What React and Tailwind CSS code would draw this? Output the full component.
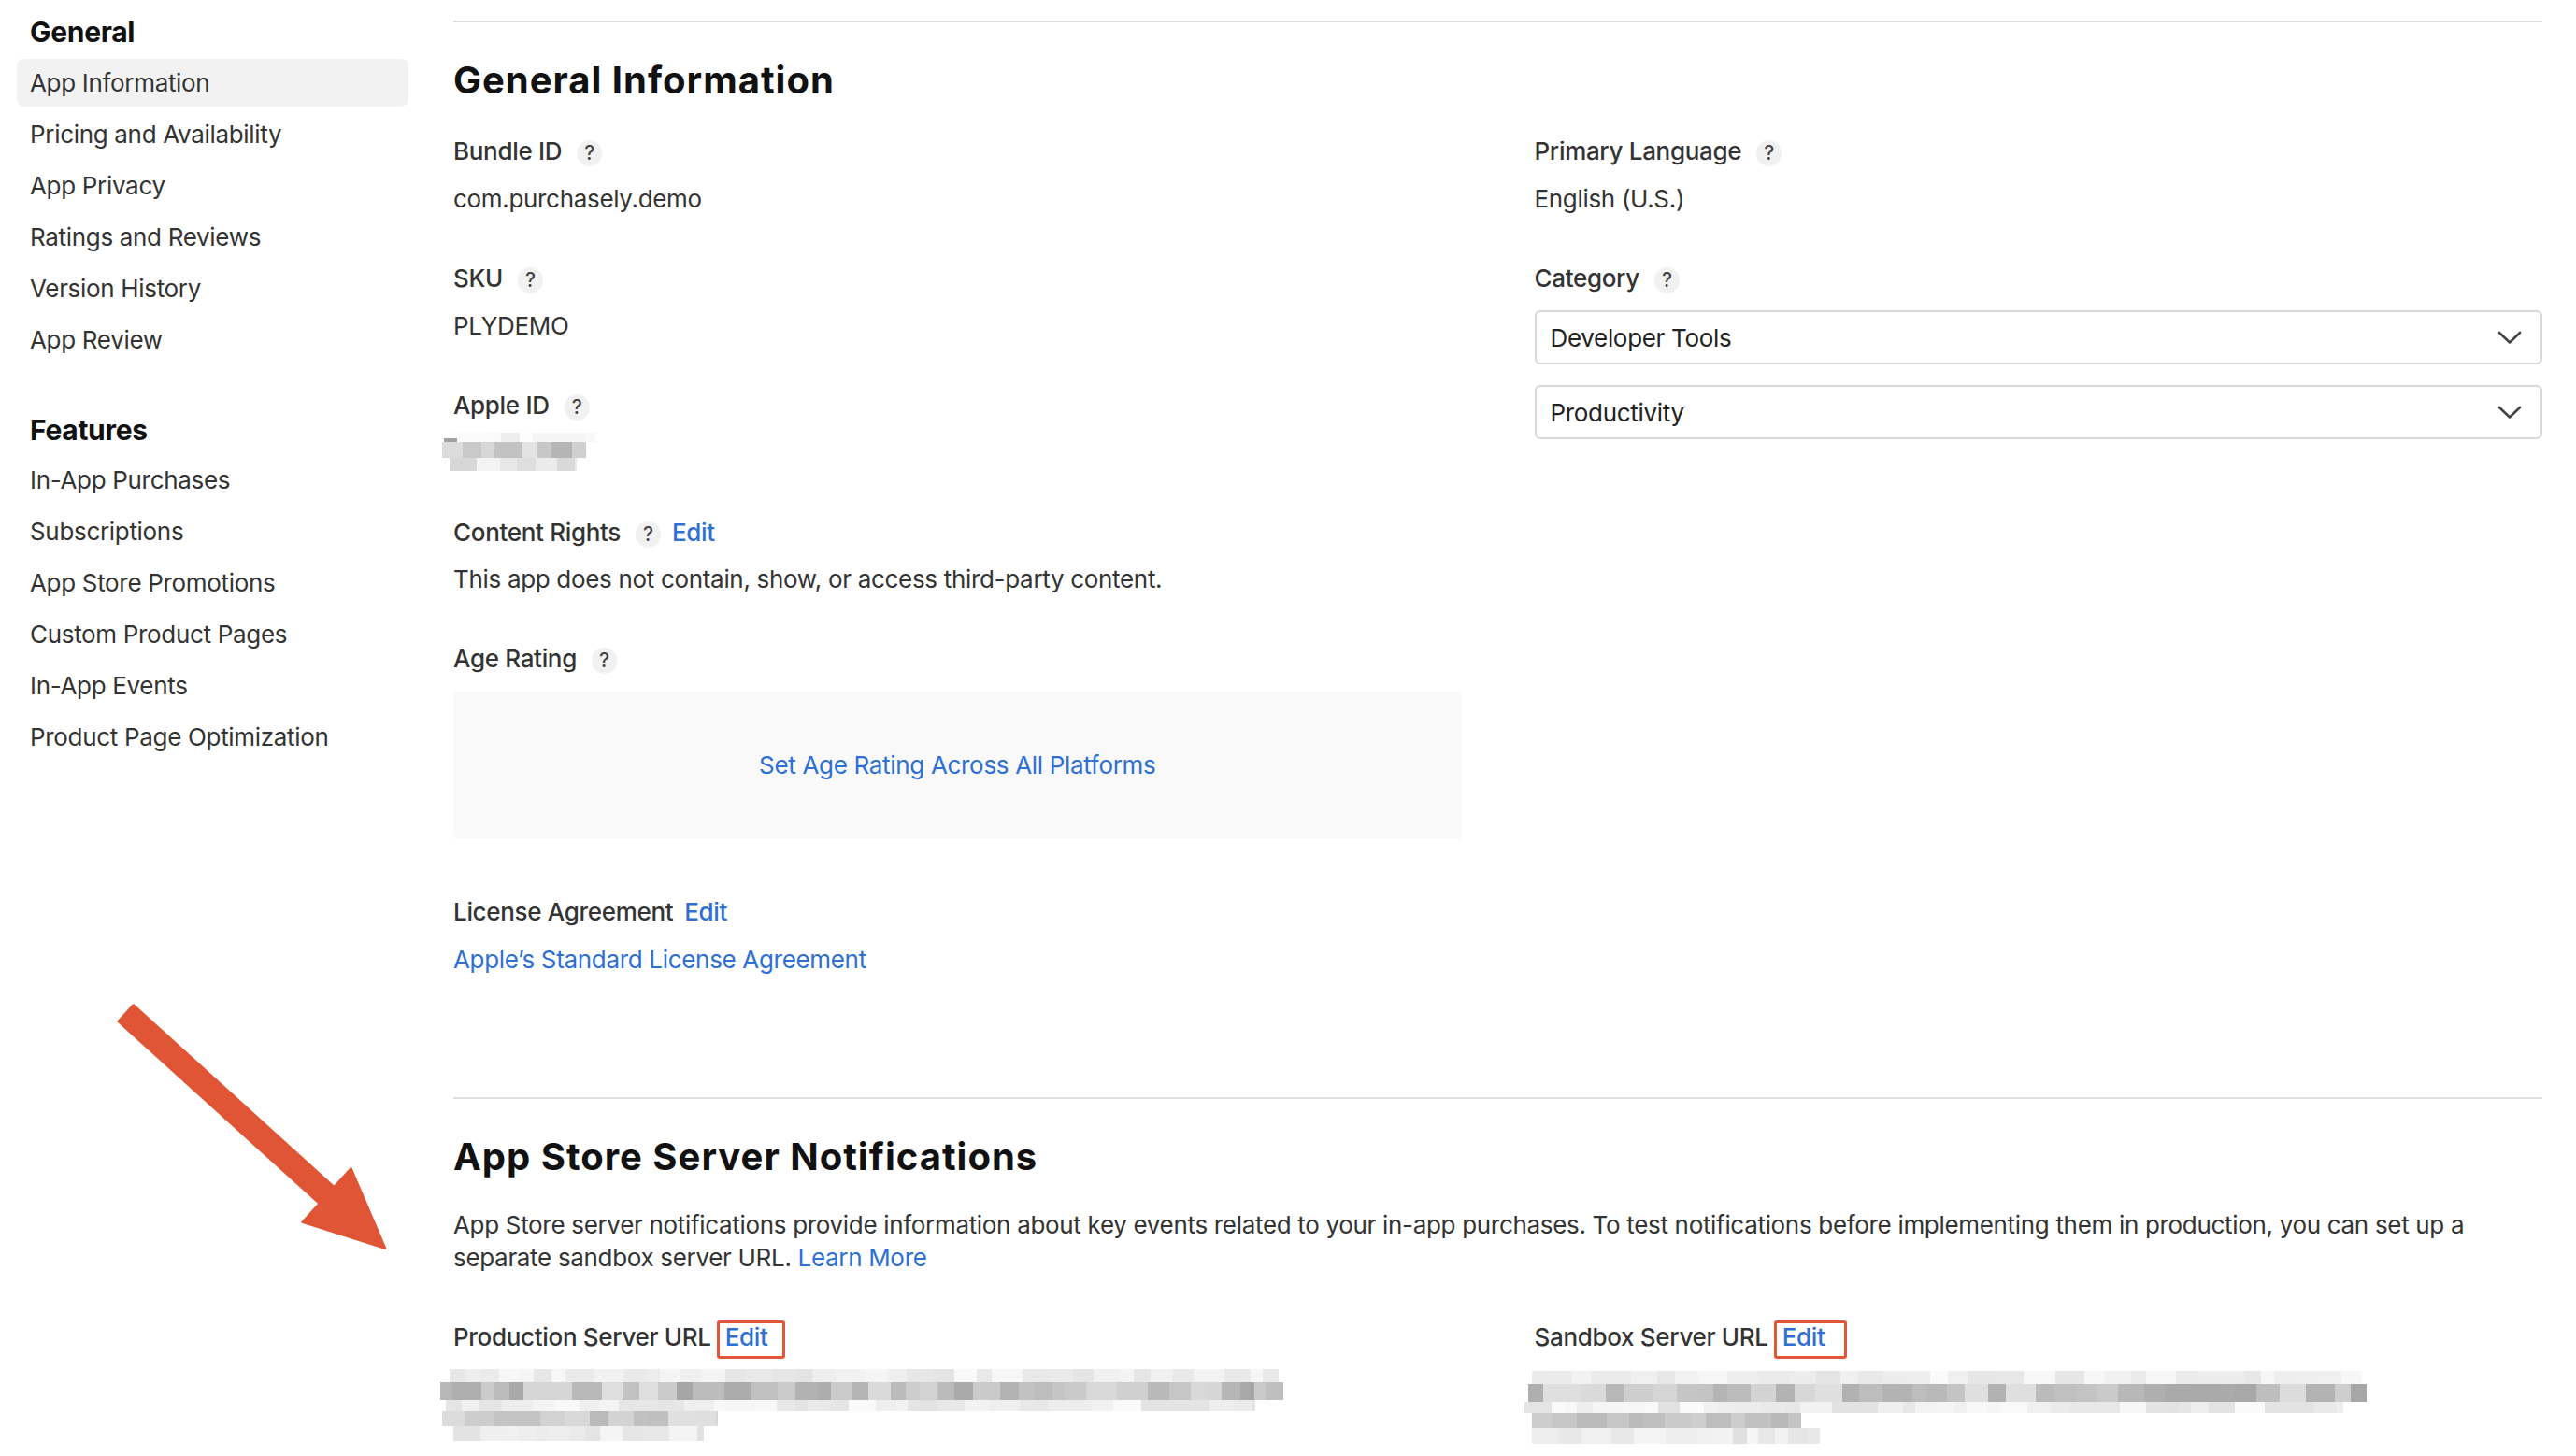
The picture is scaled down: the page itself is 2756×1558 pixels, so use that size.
import React from "react";

function rng(seed) {
  let s = seed >>> 0;
  return () => {
    s = (Math.imul(s, 1664525) + 1013904223) >>> 0;
    return s / 4294967296;
  };
}

function Pixelated({ width, height, rows, seed, className = "" }) {
  const r = rng(seed);
  const rects = [];
  rows.forEach((row, ri) => {
    let x = row.x0;
    while (x < row.x1) {
      const w = Math.round(12 + r() * 22);
      const g = Math.round(row.min + r() * (row.max - row.min));
      rects.push(
        <rect
          key={ri + "-" + x}
          x={x}
          y={row.y}
          width={Math.min(w, row.x1 - x)}
          height={row.h}
          fill={"rgb(" + g + "," + g + "," + g + ")"}
        />
      );
      x += w;
    }
  });
  return (
    <svg width={width} height={height} className={className} shapeRendering="crispEdges">
      {rects}
    </svg>
  );
}

function Help() {
  return (
    <span className="inline-flex h-[28px] w-[27px] items-center justify-center rounded-full bg-[#f1f1f1] text-[21px] leading-none text-[#444]">
      ?
    </span>
  );
}

function Label({ children, help = true, edit = false }) {
  return (
    <div className="flex h-[36px] items-center text-[26px] font-medium leading-[36px] text-[#333]">
      <span>{children}</span>
      {help && (
        <span className="ml-[16px]">
          <Help />
        </span>
      )}
      {edit && <span className="ml-[12px] text-[#2e6fd3]">Edit</span>}
    </div>
  );
}

function Value({ children }) {
  return <div className="mt-[15px] h-[36px] text-[26px] leading-[36px] text-[#333]">{children}</div>;
}

function Chevron() {
  return (
    <svg width="26" height="15" viewBox="0 0 26 15">
      <polyline points="2,2 13,12.5 24,2" fill="none" stroke="#444" strokeWidth="2.6" strokeLinecap="round" strokeLinejoin="round" />
    </svg>
  );
}

function Select({ children, className = "" }) {
  return (
    <div className={"flex h-[58px] items-center justify-between rounded-[6px] border-2 border-[#d8d8d8] pl-[15px] pr-[20px] text-[26px] text-[#222] " + className}>
      <span>{children}</span>
      <Chevron />
    </div>
  );
}

function RedEdit({ width }) {
  return (
    <span
      className="ml-[6px] inline-block h-[41px] rounded-[3px] border-[3px] border-[#e2553a] pl-[6px] text-[26px] font-medium leading-[30px] text-[#2e6fd3]"
      style={{ width }}
    >
      Edit
    </span>
  );
}

const navGeneral = ["App Information", "Pricing and Availability", "App Privacy", "Ratings and Reviews", "Version History", "App Review"];
const navFeatures = ["In-App Purchases", "Subscriptions", "App Store Promotions", "Custom Product Pages", "In-App Events", "Product Page Optimization"];

function NavList({ items, active }) {
  return (
    <ul className="flex flex-col gap-[4px]">
      {items.map((it) => (
        <li
          key={it}
          className={
            "h-[51px] rounded-[8px] pl-[14px] text-[26px] leading-[51px] text-[#333] " +
            (it === active ? "bg-[#f2f2f2]" : "")
          }
        >
          {it}
        </li>
      ))}
    </ul>
  );
}

export default function App() {
  return (
    <div
      className="relative h-[1558px] w-[2756px] overflow-hidden bg-white tracking-[-0.02em] text-[#333]"
      style={{ fontFamily: "Inter, 'Noto Sans', 'Liberation Sans', sans-serif" }}
    >
      <div className="flex">
        <aside className="w-[485px] shrink-0 pl-[18px] pr-[48px] pt-[14px]">
          <h3 className="pl-[14px] text-[30px] font-bold leading-[40px] tracking-[-0.01em] text-[#111]">General</h3>
          <div className="mt-[9px]">
            <NavList items={navGeneral} active="App Information" />
          </div>
          <h3 className="mt-[51px] pl-[14px] text-[30px] font-bold leading-[40px] tracking-[-0.01em] text-[#111]">Features</h3>
          <div className="mt-[8px]">
            <NavList items={navFeatures} />
          </div>
        </aside>

        <main className="w-[2235px] shrink-0">
          <div className="mt-[22px] h-[2px] bg-[#dedede]" />
          <h2 className="mt-[38px] text-[40px] font-bold leading-[48px] tracking-[0.025em] text-[#111]">General Information</h2>

          <div className="mt-[34px] grid grid-cols-2 gap-x-[78px]">
            <div>
              <Label>Bundle ID</Label>
              <Value>com.purchasely.demo</Value>

              <div className="mt-[49px]">
                <Label>SKU</Label>
              </div>
              <Value>PLYDEMO</Value>

              <div className="mt-[49px]">
                <Label>Apple ID</Label>
              </div>
              <div className="mt-[15px] flex h-[36px] items-start">
                <Pixelated
                  width={180}
                  height={41}
                  seed={7}
                  className="-ml-[18px] -mt-[4px] shrink-0"
                  rows={[
                    { y: 0, h: 10, x0: 14, x1: 170, min: 236, max: 252 },
                    { y: 6, h: 8, x0: 8, x1: 22, min: 150, max: 175 },
                    { y: 10, h: 17, x0: 6, x1: 160, min: 175, max: 228 },
                    { y: 27, h: 14, x0: 14, x1: 150, min: 212, max: 245 },
                  ]}
                />
              </div>

              <div className="mt-[49px]">
                <Label edit>Content Rights</Label>
              </div>
              <div className="mt-[14px] h-[36px] text-[26px] leading-[36px] text-[#333]">
                This app does not contain, show, or access third-party content.
              </div>

              <div className="mt-[49px]">
                <Label>Age Rating</Label>
              </div>
              <div className="mt-[17px] flex h-[158px] items-center justify-center rounded-[4px] bg-[#f9f9f9] text-[26px] leading-[36px] text-[#2e6fd3]">
                Set Age Rating Across All Platforms
              </div>

              <div className="mt-[60px] flex h-[36px] items-center text-[26px] font-medium leading-[36px] text-[#333]">
                <span>License Agreement</span>
                <span className="ml-[12px] text-[#2e6fd3]">Edit</span>
              </div>
              <div className="mt-[15px] h-[36px] text-[26px] leading-[36px] text-[#2e6fd3]">
                Apple’s Standard License Agreement
              </div>
            </div>

            <div>
              <Label>Primary Language</Label>
              <Value>English (U.S.)</Value>

              <div className="mt-[49px]">
                <Label>Category</Label>
              </div>
              <Select className="mt-[16px]">Developer Tools</Select>
              <Select className="mt-[22px]">Productivity</Select>
            </div>
          </div>

          <div className="mt-[129px] h-[2px] bg-[#dedede]" />
          <h2 className="mt-[38px] text-[40px] font-bold leading-[48px] tracking-[0.025em] text-[#111]">App Store Server Notifications</h2>
          <p className="mt-[31px] text-[26px] leading-[35px] text-[#333]">
            App Store server notifications provide information about key events related to your in-app purchases. To test notifications before implementing them in production, you can set up a
            <br />
            separate sandbox server URL. <span className="text-[#2e6fd3]">Learn More</span>
          </p>

          <div className="mt-[50px] grid grid-cols-2 gap-x-[78px]">
            <div>
              <div className="flex items-start">
                <span className="text-[26px] font-medium leading-[36px] text-[#333]">Production Server URL</span>
                <RedEdit width={73} />
              </div>
              <Pixelated
                width={940}
                height={78}
                seed={21}
                className="-ml-[22px] mt-[11px]"
                rows={[
                  { y: 0, h: 14, x0: 18, x1: 905, min: 228, max: 250 },
                  { y: 14, h: 19, x0: 8, x1: 910, min: 165, max: 225 },
                  { y: 33, h: 12, x0: 14, x1: 880, min: 225, max: 250 },
                  { y: 45, h: 16, x0: 10, x1: 305, min: 180, max: 225 },
                  { y: 61, h: 16, x0: 22, x1: 290, min: 222, max: 246 },
                ]}
              />
            </div>
            <div>
              <div className="flex items-start">
                <span className="text-[26px] font-medium leading-[36px] text-[#333]">Sandbox Server URL</span>
                <RedEdit width={78} />
              </div>
              <Pixelated
                width={930}
                height={80}
                seed={99}
                className="-ml-[15px] mt-[13px]"
                rows={[
                  { y: 0, h: 14, x0: 12, x1: 900, min: 228, max: 250 },
                  { y: 14, h: 19, x0: 8, x1: 905, min: 165, max: 225 },
                  { y: 33, h: 12, x0: 4, x1: 880, min: 225, max: 250 },
                  { y: 45, h: 16, x0: 12, x1: 300, min: 180, max: 222 },
                  { y: 61, h: 17, x0: 12, x1: 320, min: 222, max: 246 },
                ]}
              />
            </div>
          </div>
        </main>
      </div>

      <svg className="pointer-events-none absolute left-[120px] top-[1070px]" width="300" height="272" viewBox="0 0 300 272">
        <polygon
          points="6.4,22.9 22.6,5.1 237.5,200 255.6,180 292.4,266 203.2,237.8 221.4,217.8"
          fill="#e05535"
          stroke="#e05535"
          strokeWidth="2"
          strokeLinejoin="round"
        />
      </svg>
    </div>
  );
}
